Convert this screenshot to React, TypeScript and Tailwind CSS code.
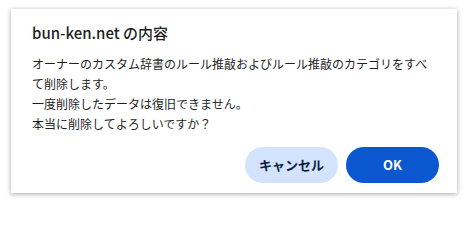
import React from 'react';

const jp = { fontFamily: '"Noto Sans CJK JP", "Noto Sans", sans-serif' };

const message =
  'オーナーのカスタム辞書のルール推敲およびルール推敲のカテゴリをすべて削除します。\n一度削除したデータは復旧できません。\n本当に削除してよろしいですか？';

export default function App() {
  return (
    <div className="w-[469px] h-[204px] bg-white pt-[9px] pl-[11px]" style={jp}>
      <div className="w-[446px] h-[184px] bg-white shadow-[0_1px_5px_rgba(0,0,0,0.35)] flex flex-col pl-[21px] pr-[18px] pt-[14px] pb-[10px]">
        <h1 className="text-[15px] leading-[20px] font-medium text-[#1f1f1f]">bun-ken.net の内容</h1>
        <p className="mt-[11px] w-[400px] text-[12px] leading-[20px] text-[#1f1f1f] whitespace-pre-line">
          {message}
        </p>
        <div className="mt-auto flex justify-end gap-[8px]">
          <button className="w-[93px] h-[36px] rounded-full bg-[#d3e3fd] text-[#0a1f44] text-[13px] font-bold">
            キャンセル
          </button>
          <button className="w-[93px] h-[36px] rounded-full bg-[#0b57d0] text-white text-[13px] font-bold">
            OK
          </button>
        </div>
      </div>
    </div>
  );
}
